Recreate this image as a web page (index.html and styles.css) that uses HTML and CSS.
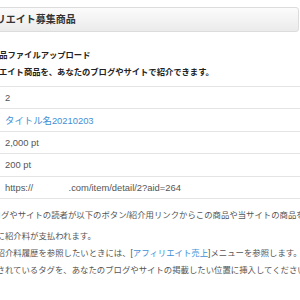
FILE: index.html
```html
<!DOCTYPE html>
<html lang="ja">
<head>
  <meta charset="UTF-8" />
  <meta name="viewport" content="width=device-width, initial-scale=1.0"/>
  <title>アフィリエイト募集商品</title>
  <link rel="stylesheet" href="styles.css">
</head>
<body>
  <div class="page">
    <div class="panel-title">アフィリエイト募集商品</div>

    <div class="intro">
      <p class="intro-title">紹介用商品ファイルアップロード</p>
      <p class="intro-text">アフィリエイト商品を、あなたのブログやサイトで紹介できます。</p>
    </div>

    <table class="item-table">
      <tr>
        <th>商品ID</th>
        <td>2</td>
      </tr>
      <tr class="odd">
        <th>商品名</th>
        <td><a href="#">タイトル名20210203</a></td>
      </tr>
      <tr>
        <th>価格</th>
        <td>2,000 pt</td>
      </tr>
      <tr>
        <th>紹介料</th>
        <td>200 pt</td>
      </tr>
      <tr>
        <th>URL</th>
        <td>https://<span class="masked">example</span>.com/item/detail/2?aid=264</td>
      </tr>
    </table>

    <div class="notes">
      <p class="note-first">※ブログやサイトの読者が以下のボタン/紹介用リンクからこの商品や当サイトの商品を購入すると、</p>
      <p class="note-wrap">あなたに紹介料が支払われます。</p>
      <p>これら紹介料履歴を参照したいときには、[<a href="#">アフィリエイト売上</a>]メニューを参照します。</p>
      <p>※表示されているタグを、あなたのブログやサイトの掲載したい位置に挿入してください。</p>
    </div>
  </div>
</body>
</html>
```

FILE: styles.css
```css
html, body {
  margin: 0;
  width: 300px;
  height: 300px;
  overflow: hidden;
  background-color: #ffffff;
}

body {
  font-family: 'Liberation Sans', 'Noto Sans CJK JP', sans-serif;
  color: #333;
}

.page {
  margin-left: -42px;
  width: 600px;
  padding-top: 7px;
}

.panel-title {
  width: 325px;
  height: 23px;
  line-height: 23px;
  padding: 0 7px;
  font-size: 10px;
  font-weight: bold;
  color: #333;
  background: linear-gradient(#fbfbfb, #ebebeb);
  border: 1px solid #dcdcdc;
  border-radius: 3px;
}

.intro {
  padding: 15px 0 0 8px;
}

.intro p {
  margin: 0;
  font-size: 8.3px;
  line-height: 17px;
  font-weight: bold;
  color: #222;
  white-space: nowrap;
}

.item-table {
  width: 342px;
  margin-top: 5px;
  table-layout: fixed;
  border-collapse: collapse;
  font-size: 9.4px;
  color: #555;
}

.item-table th,
.item-table td {
  height: 21.4px;
  padding: 0 7px;
  border-top: 1px solid #e4e4e4;
  border-bottom: 1px solid #e4e4e4;
  text-align: left;
  white-space: nowrap;
  overflow: hidden;
}

.item-table th {
  box-sizing: border-box;
  width: 40px;
  font-weight: normal;
}

.item-table tr.odd td,
.item-table tr.odd th {
  border-top-color: #ececec;
}

.item-table a,
.notes a {
  color: #3f8fd6;
  text-decoration: none;
}

.masked {
  color: #fff;
}

.notes {
  padding: 8px 0 0 13.4px;
}

.notes p {
  margin: 0;
  font-size: 8.4px;
  line-height: 17px;
  color: #555;
  white-space: nowrap;
}

.notes .note-first {
  text-indent: 4.4px;
}

.notes .note-wrap {
  margin-top: 4px;
}
```
